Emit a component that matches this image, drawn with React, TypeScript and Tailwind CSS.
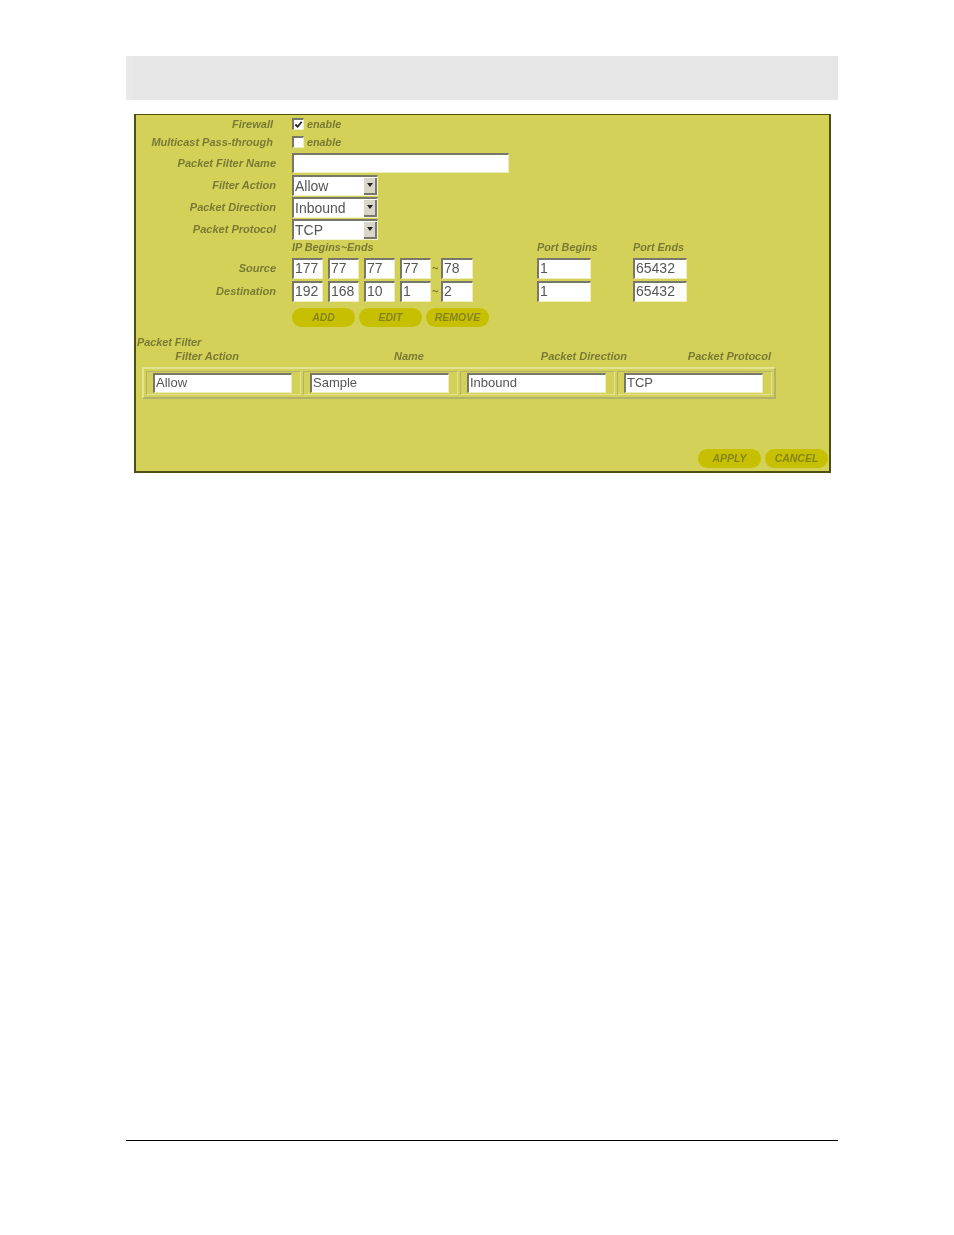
const labelText = "font-bold italic text-[11px] leading-none text-[#7a7a36] text-right";
const plainLabel = "font-bold italic text-[10.8px] leading-none text-[#7a7a36]";
const fieldBorder = "border-t-2 border-l-2 border-r border-b border-t-[#77776a] border-l-[#77776a] border-r-[#eeeebb] border-b-[#eeeebb]";

function Label({ children }: { children: React.ReactNode }) {
  return <div className={labelText}>{children}</div>;
}

function Field({ value, className }: { value?: string; className: string }) {
  return (
    <div className={`bg-white flex items-center pl-[1px] pb-[2px] text-[14px] leading-none text-[#555] ${fieldBorder} ${className}`}>
      {value}
    </div>
  );
}

function Check({ checked }: { checked?: boolean }) {
  return (
    <div className={`w-[12px] h-[12px] bg-white flex items-center justify-center ${fieldBorder}`}>
      {checked && (
        <svg viewBox="0 0 10 10" className="w-[9px] h-[9px]">
          <path d="M1.5 5 L4 7.5 L8.5 2" fill="none" stroke="#222" strokeWidth="2" />
        </svg>
      )}
    </div>
  );
}

function Select({ value }: { value: string }) {
  return (
    <div className={`w-[86px] h-[21px] bg-white flex items-center justify-between ${fieldBorder} border-r-[#f4f4d0] border-b-[#f4f4d0]`}>
      <span className="pl-[1px] pb-[1px] text-[14px] leading-none text-[#555]">{value}</span>
      <span className="w-[13px] h-[17px] bg-[#d8d6c8] border-r-2 border-b-2 border-[#77776a] flex items-center justify-center">
        <span className="w-0 h-0 border-x-[3px] border-x-transparent border-t-[4px] border-t-[#222]" />
      </span>
    </div>
  );
}

function Pill({ children }: { children: React.ReactNode }) {
  return (
    <div className="w-[63px] h-[19px] rounded-full bg-[#c6c000] flex items-center justify-center font-bold italic text-[10.5px] leading-none text-[#85851c]">
      {children}
    </div>
  );
}

function OptionRow({ label, checked }: { label: string; checked?: boolean }) {
  return (
    <div className="grid grid-cols-[137px_1fr] gap-x-[19px] items-center h-[18px]">
      <Label>{label}</Label>
      <div className="flex items-center gap-[3px]">
        <Check checked={checked} />
        <span className={plainLabel}>enable</span>
      </div>
    </div>
  );
}

function FormRow({ label, children, className }: { label: string; children: React.ReactNode; className: string }) {
  return (
    <div className={`grid grid-cols-[140px_1fr] gap-x-[16px] items-center ${className}`}>
      <Label>{label}</Label>
      {children}
    </div>
  );
}

function AddressRow({ label, ip, last, ports }: { label: string; ip: string[]; last: string; ports: string[] }) {
  return (
    <FormRow label={label} className="h-[21px] mb-[2px]">
      <div className="grid grid-cols-[245px_96px_auto]">
        <div className="flex items-center">
          {ip.map((part, i) => (
            <Field key={i} value={part} className="w-[31px] h-[21px] mr-[5px]" />
          ))}
          <span className="w-[8px] -ml-[4px] mr-[1px] text-[11px] font-bold text-[#7a7a36]">~</span>
          <Field value={last} className="w-[32px] h-[21px]" />
        </div>
        <Field value={ports[0]} className="w-[54px] h-[21px]" />
        <Field value={ports[1]} className="w-[54px] h-[21px]" />
      </div>
    </FormRow>
  );
}

const filterCells = ["Allow", "Sample", "Inbound", "TCP"];

export default function App() {
  return (
    <div className="h-[1235px] bg-white pl-[126px] pr-[116px] pt-[56px] overflow-hidden flex flex-col font-['Liberation_Sans',Arial,sans-serif] blur-[0.7px]">
      <div className="h-[44px] bg-[#e6e6e7] border-l-[8px] border-[#e9e9ea]" />

      <div className="w-[697px] h-[359px] ml-[8px] mt-[14px] bg-[#d3d157] border-2 border-t border-[#4f4f12] relative">
        <OptionRow label="Firewall" checked />
        <OptionRow label="Multicast Pass-through" />

        <FormRow label="Packet Filter Name" className="h-[20px] mt-[2px]">
          <Field className="w-[217px] h-[20px]" />
        </FormRow>

        <div className="mt-[2px]">
          <FormRow label="Filter Action" className="h-[21px] mb-[1px]"><Select value="Allow" /></FormRow>
          <FormRow label="Packet Direction" className="h-[21px] mb-[1px]"><Select value="Inbound" /></FormRow>
          <FormRow label="Packet Protocol" className="h-[21px] mb-[1px]"><Select value="TCP" /></FormRow>
        </div>

        <div className="grid grid-cols-[245px_96px_auto] ml-[156px] h-[13px] mb-[4px] items-center">
          <span className={plainLabel}>IP Begins~Ends</span>
          <span className={plainLabel}>Port Begins</span>
          <span className={plainLabel}>Port Ends</span>
        </div>

        <AddressRow label="Source" ip={["177", "77", "77", "77"]} last="78" ports={["1", "65432"]} />
        <AddressRow label="Destination" ip={["192", "168", "10", "1"]} last="2" ports={["1", "65432"]} />

        <div className="flex gap-[4px] ml-[156px] mt-[6px]">
          <Pill>ADD</Pill>
          <Pill>EDIT</Pill>
          <Pill>REMOVE</Pill>
        </div>

        <div className={`mt-[10px] ml-[1px] ${plainLabel}`}>Packet Filter</div>

        <div className={`grid grid-cols-[103px_185px_203px_144px] mt-[3px] ${labelText}`}>
          <span>Filter Action</span>
          <span>Name</span>
          <span>Packet Direction</span>
          <span>Packet Protocol</span>
        </div>

        <div className="w-[634px] h-[32px] ml-[6px] mt-[5px] p-[2px] grid grid-cols-4 gap-[2px] border-2 border-[#e4e394] border-r-[#b2b16e] border-b-[#b2b16e]">
          {filterCells.map((cell) => (
            <div key={cell} className="border border-[#b2b16e] border-r-[#e4e394] border-b-[#e4e394] flex items-center pl-[6px]">
              <Field value={cell} className="w-[139px] h-[20px] !text-[13px]" />
            </div>
          ))}
        </div>

        <div className="absolute right-[1px] bottom-[3px] flex gap-[4px]">
          <Pill>APPLY</Pill>
          <Pill>CANCEL</Pill>
        </div>
      </div>

      <div className="mt-auto mb-[94px] h-[1px] bg-black" />
    </div>
  );
}
